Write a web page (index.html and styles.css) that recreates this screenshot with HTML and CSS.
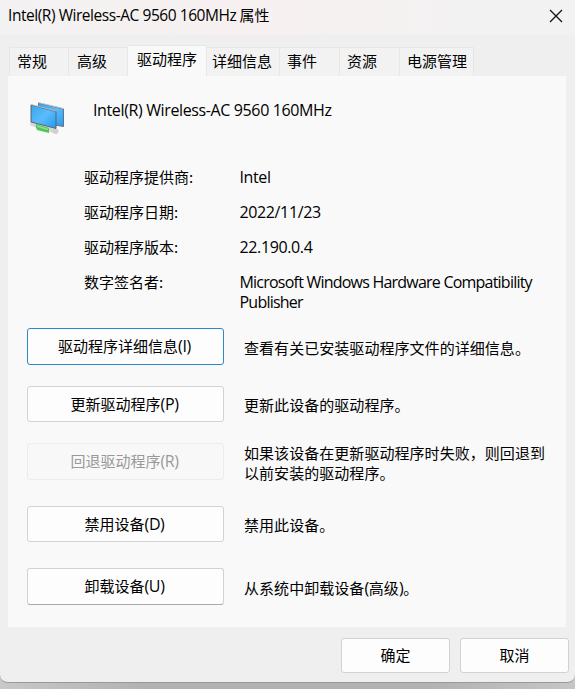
FILE: index.html
```
<!DOCTYPE html>
<html lang="zh-CN">
<head>
<meta charset="utf-8">
<title>Intel(R) Wireless-AC 9560 160MHz 属性</title>
<link rel="stylesheet" href="styles.css">
</head>
<body>
<div class="window">
  <header class="titlebar">
    <h1 class="title"><span class="latin title-latin">Intel(R) Wireless-AC 9560 160MHz</span> 属性</h1>
    <svg class="close" width="14" height="14" viewBox="0 0 14 14"><path d="M1 1L13 13M13 1L1 13" fill="none" stroke="#111" stroke-width="1.3"/></svg>
  </header>
  <nav class="tabs">
    <span class="tab first">常规</span>
    <span class="tab w59">高级</span>
    <span class="tab active">驱动程序</span>
    <span class="tab w73 tight">详细信息</span>
    <span class="tab w60">事件</span>
    <span class="tab w60">资源</span>
    <span class="tab w74">电源管理</span>
  </nav>
  <main class="page">
    <div class="device">
      <svg class="device-icon" width="38" height="38" viewBox="0 0 38 38">
        <defs>
          <linearGradient id="screen" x1="0" y1="0" x2="1" y2="1"><stop offset="0" stop-color="#35a4f2"/><stop offset=".5" stop-color="#5bbcfb"/><stop offset="1" stop-color="#2699ee"/></linearGradient>
        </defs>
        <path d="M10.500 4L35.500 10V27.500L10.500 23Z" fill="url(#screen)" stroke="#68717c"/>
        <path d="M10 3.500L35.500 9.500" stroke="#c2c6ca" stroke-width="1"/>
        <path d="M4 25L28 32.500" stroke="#d6d8d8" stroke-width="4" stroke-linecap="round"/>
        <path d="M8 25L21 29V34L9 31Q7 28 8 25Z" fill="#4fc657"/>
        <path d="M9 27L20 30.500" stroke="#8be18d" stroke-width="1.500"/>
        <ellipse cx="27.500" cy="32.200" rx="3" ry="2.600" fill="#cfd1d1"/>
        <path d="M3 6L28 12.500V29.500L3 23Z" fill="url(#screen)" stroke="#596370"/>
        <path d="M3 5.500L28 12" stroke="#b3b9be" stroke-width="1"/>
      </svg>
      <span class="latin device-name">Intel(R) Wireless-AC 9560 160MHz</span>
    </div>
    <dl class="fields">
      <dt>驱动程序提供商:</dt><dd><span class="latin">Intel</span></dd>
      <dt>驱动程序日期:</dt><dd><span class="latin date">2022/11/23</span></dd>
      <dt>驱动程序版本:</dt><dd><span class="latin">22.190.0.4</span></dd>
      <dt>数字签名者:</dt><dd><span class="latin signer">Microsoft Windows Hardware Compatibility<br>Publisher</span></dd>
    </dl>
    <div class="actions">
      <button class="btn focused">驱动程序详细信息<span class="latin">(I)</span></button><p>查看有关已安装驱动程序文件的详细信息。</p>
      <button class="btn">更新驱动程序<span class="latin">(P)</span></button><p class="raised">更新此设备的驱动程序。</p>
      <button class="btn" disabled>回退驱动程序<span class="latin">(R)</span></button><p>如果该设备在更新驱动程序时失败，则回退到<br>以前安装的驱动程序。</p>
      <button class="btn">禁用设备<span class="latin">(D)</span></button><p class="raised">禁用此设备。</p>
      <button class="btn deep">卸载设备<span class="latin">(U)</span></button><p>从系统中卸载设备<span class="latin">(</span>高级<span class="latin">)</span>。</p>
    </div>
  </main>
  <footer class="footer">
    <button class="btn">确定</button>
    <button class="btn">取消</button>
  </footer>
</div>
</body>
</html>
```
FILE: styles.css
```
* { box-sizing: border-box; }
body {
  margin: 0;
  height: 689px;
  overflow: hidden;
  background: linear-gradient(90deg, #c8c8c8, #b2b2b2 25%, #b2b2b2 75%, #c6c6c6);
  font: 15px/20px "Noto Sans CJK SC", sans-serif;
  color: #000;
}
.latin { font-family: "Open Sans", sans-serif; font-size: 16px; letter-spacing: -0.370px; }
.title-latin { font-size: 15.500px; letter-spacing: -0.450px; }
.signer { letter-spacing: -0.780px; }
.window {
  height: 683px;
  display: flex;
  flex-direction: column;
  background: #efefef;
  border-bottom: 1px solid #999;
  border-radius: 0 0 8px 8px;
  overflow: hidden;
}
.titlebar {
  height: 35px;
  flex: none;
  display: flex;
  justify-content: space-between;
  padding: 5px 12px 0 8px;
  background: linear-gradient(90deg, #f3f2f2, #f7f0f0 45%, #f3f2f2 80%);
}
.title { margin: 0; font-size: 15px; font-weight: 400; line-height: 20px; white-space: nowrap; }
.close { margin-top: 4px; }
.tabs {
  height: 41px;
  flex: none;
  display: flex;
  align-items: flex-end;
  padding-left: 9px;
}
.tab {
  height: 29px;
  padding: 3px 0 0 7px;
  border: solid #e7e7e7;
  border-width: 1px 1px 0 0;
  background: #f2f2f2;
  white-space: nowrap;
}
.first { width: 60px; border-left-width: 1px; }
.w59 { width: 59px; padding-left: 8px; }
.w60 { width: 60px; }
.w73 { width: 73px; }
.w74 { width: 74px; }
.tight { padding-left: 5px; }
.active { width: 79px; height: 31px; padding-left: 9px; background: #f9f9f9; }
.page {
  width: 559px;
  height: 551px;
  flex: none;
  margin-left: 8px;
  background: #f9f9f9;
  border-right: 1px solid #f0f0f0;
}
.device { height: 91px; display: flex; padding: 23px 0 0 20px; }
.device-name { margin: 1px 0 0 27px; }
.fields {
  display: grid;
  grid-template-columns: 155.500px 310px;
  grid-template-rows: 35px 35px 35px 56px;
  margin: 0;
  padding-left: 76px;
}
.fields dd { margin: 0; white-space: nowrap; }
.actions {
  display: grid;
  grid-template-columns: 197px 310px;
  grid-template-rows: 58px 57px 63px 62px 37px;
  column-gap: 20px;
  padding-left: 19px;
}
.actions p { margin: 0; height: 40px; line-height: 20px; padding-top: 10px; letter-spacing: 0.050px; white-space: nowrap; }
.actions p:nth-of-type(3) { padding-top: 0; }
.actions .raised { padding-top: 9px; }
.btn {
  height: 36px;
  padding: 0 0 1px;
  border: 1px solid #d2d2d2;
  border-radius: 3px;
  background: #fdfdfd;
  color: #000;
  font: inherit;
}
.actions .btn { padding-right: 2px; }
.focused { height: 37px; border-color: #2d87c9; }
.btn:disabled { height: 37px; background: #f8f8f8; border-color: #ececec; color: #999; }
.deep { height: 37px; border-bottom-color: #aaa; }
.footer {
  display: flex;
  justify-content: flex-end;
  gap: 10px;
  padding: 11px 6px 0 0;
}
.footer .btn { width: 109px; height: 35px; }
```
